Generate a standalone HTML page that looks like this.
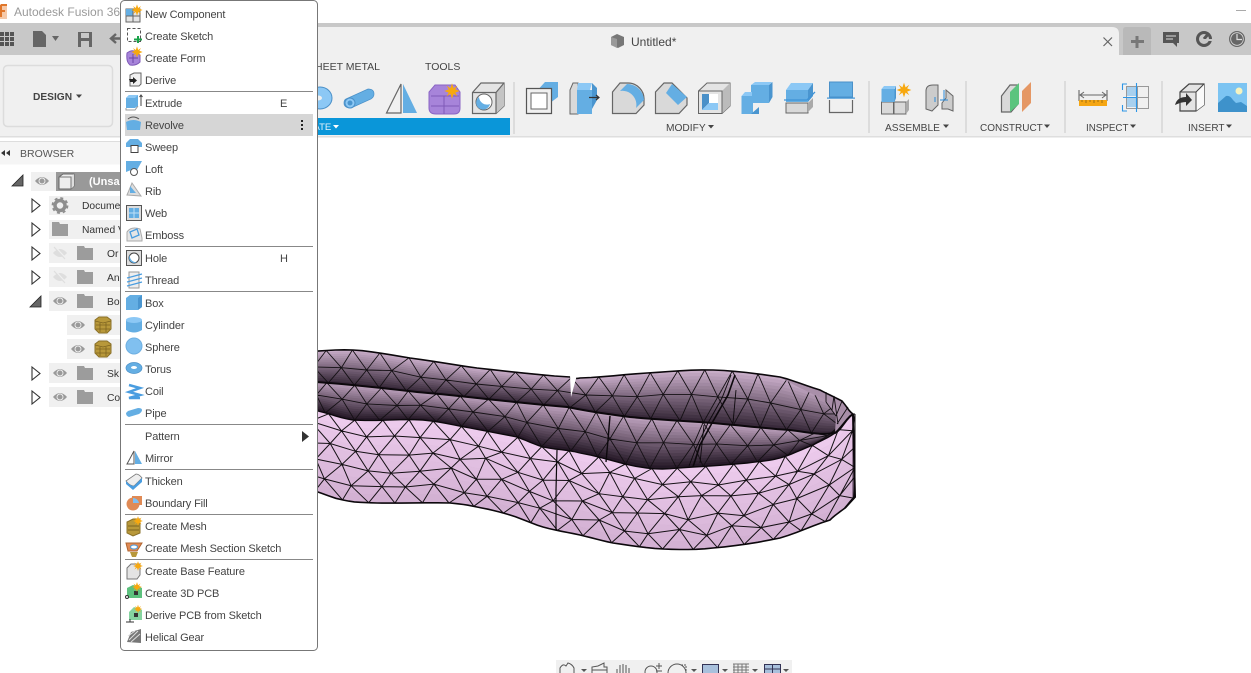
<!DOCTYPE html>
<html><head><meta charset="utf-8"><style>
html,body{margin:0;padding:0;background:#fff;width:1251px;height:673px;overflow:hidden}
svg{display:block;position:absolute;left:0;top:0}
text{font-family:"Liberation Sans",sans-serif;font-size:11px;fill:#444}
.m text{letter-spacing:-.12px}
.t text{font-size:10.300px;fill:#333}
.c{font-size:10.200px}
.g{stroke:#666;fill:#d9d9d9;stroke-width:1.2}
.b{fill:#64aee3;stroke:#4a90c8;stroke-width:.7}
.l{fill:#8cc8f5}
.d{fill:#4a95cf}
</style></head><body>
<svg id="s" width="1251" height="673" viewBox="0 0 1251 673">
<defs>
<g id="eye"><path d="M0 5Q7-3 14 5Q7 13 0 5Z" fill="#9a9a9a"/><circle cx="7" cy="5" r="3" fill="none" stroke="#f0f0f0" stroke-width=".9"/></g>
<g id="eyeoff"><path d="M0 5Q7-3 14 5Q7 13 0 5Z" fill="#dedede"/><path d="M2 -1L13 11" stroke="#f0f0f0" stroke-width="2"/><path d="M1 -1L12 11" stroke="#dedede" stroke-width="1.200"/></g>
<path id="folder" d="M0 1H7L8 3H16V15H0Z" fill="#9c9c9c"/>
<path id="tri" d="M0 0L8 6.500L0 13Z" fill="#fff" stroke="#333" stroke-width="1.100"/>
<path id="tridown" d="M0 11L11 0V11Z" fill="#666" stroke="#222" stroke-width=".8"/>
<g id="mesh"><path d="M0 3L4 0H12L16 3V12L12 16H4L0 12Z" fill="#b8983a" stroke="#8a7028"/><path d="M0 4L8 6L16 4M1 8H15M1 12H15M5 6V15M11 6V15" stroke="#7d6420" fill="none" stroke-width=".8"/></g>
<polygon id="star" points="0,-7 1.500,-2.500 5,-5 3,-1.500 7,0 3,1.500 5,5 1.500,2.500 0,7 -1.500,2.500 -5,5 -3,1.500 -7,0 -3,-1.500 -5,-5 -1.500,-2.500" fill="#f7a80f"/>
</defs>

<!-- title + tab bar -->
<rect x="0" y="23" width="1251" height="32" fill="#c8c8c8"/>
<path d="M200 55V31Q200 27 204 27H1112Q1119 27 1119 34V55Z" fill="#f0f0f0"/>
<rect x="0" y="55" width="1251" height="81" fill="#f0f0f0"/>
<rect x="0" y="136" width="1251" height="1.500" fill="#dedede"/>
<path d="M0 4H7V19H0Z" fill="#f6c9a8"/><path d="M1 5H7M1 5V17M1 11H5" stroke="#e0762a" stroke-width="2" fill="none"/>
<text x="14" y="16" style="font-size:12px;fill:#9a9a9a">Autodesk Fusion 360</text>
<rect x="1236" y="10" width="10" height="1" fill="#aaa"/>

<!-- document tab title -->
<path d="M611 37L617 34L624 37V45L618 48L611 45Z" fill="#777"/><path d="M611 37L617 39V48L611 45Z" fill="#999"/>
<text x="631" y="46" style="font-size:12px;fill:#444">Untitled*</text>

<!-- app bar icons -->
<g fill="#555"><rect x="0" y="32" width="4" height="4"/><rect x="5" y="32" width="4" height="4"/><rect x="10" y="32" width="4" height="4"/><rect x="0" y="37" width="4" height="4"/><rect x="5" y="37" width="4" height="4"/><rect x="10" y="37" width="4" height="4"/><rect x="0" y="42" width="4" height="4"/><rect x="5" y="42" width="4" height="4"/><rect x="10" y="42" width="4" height="4"/></g>
<path d="M33 31H42L46 35V47H33Z" fill="#666"/><path d="M52 36H59L55.500 41Z" fill="#666"/>
<path d="M78 32H92V47H78Z" fill="#666"/><rect x="81" y="33" width="8" height="5" fill="#c8c8c8"/><rect x="81" y="41" width="8" height="6" fill="#c8c8c8"/>
<path d="M111 38.500H121M116 34L111 38.500L116 43" stroke="#666" stroke-width="2.400" fill="none"/>

<!-- Right of tab -->
<path d="M1123 55V30Q1123 27 1126 27H1148Q1151 27 1151 30V55Z" fill="#b9b9b9"/>
<path d="M1137 36V48M1131 41.500H1144" stroke="#777" stroke-width="3"/>
<path d="M1103.500 37.500L1112 46M1112 37.500L1103.500 46" stroke="#666" stroke-width="1.200"/>
<path d="M1163 32H1179V43H1177L1177 47L1173 43H1163Z" fill="#555"/><path d="M1166 36H1176M1166 39H1173" stroke="#ddd"/>
<circle cx="1204" cy="39" r="6.500" fill="none" stroke="#555" stroke-width="3"/><path d="M1204 39L1209 33" stroke="#555" stroke-width="3"/><path d="M1204 40L1212 40" stroke="#c8c8c8" stroke-width="2"/>
<circle cx="1237" cy="39" r="7.500" fill="#666" stroke="#666"/><circle cx="1237" cy="39" r="6.300" fill="none" stroke="#ddd" stroke-width=".8"/><path d="M1237 34V39.500H1242" stroke="#ddd" stroke-width="1.200" fill="none"/>

<!-- Design -->
<rect x="3.500" y="65.500" width="109" height="61" rx="4" fill="#f0f0f0" stroke="#dcdcdc" stroke-width="1.500"/>
<text x="33" y="100" style="font-size:10.200px;font-weight:bold;fill:#444">DESIGN</text>
<path d="M76 94.500H82L79 98Z" fill="#444"/>

<!-- Tabs -->
<text x="308" y="70" style="font-size:10.500px;fill:#444">SHEET METAL</text>
<text x="425" y="70" style="font-size:10.500px;fill:#444">TOOLS</text>

<!-- Create bar -->
<rect x="121" y="118" width="389" height="17" fill="#0a96d9"/>
<text x="313.500" y="130" style="font-size:9.500px;fill:#e8f4fb">ATE</text>
<path d="M333 125H339L336 128.500Z" fill="#fff"/>

<!-- Ribbon separators -->
<g fill="#dcdcdc"><rect x="513" y="82" width="2" height="52"/><rect x="868" y="81" width="2" height="52"/><rect x="965" y="81" width="2" height="52"/><rect x="1064" y="81" width="2" height="52"/><rect x="1161" y="81" width="2" height="52"/></g>

<!-- Ribbon labels -->
<text x="666" y="131" class="c">MODIFY</text><path d="M708 125H714L711 128.500Z" fill="#444"/>
<text x="885" y="131" class="c">ASSEMBLE</text><path d="M943 124.500H949L946 128Z" fill="#444"/>
<text x="980" y="131" style="font-size:10px">CONSTRUCT</text><path d="M1044 124.500H1050L1047 128Z" fill="#444"/>
<text x="1086" y="131" style="font-size:9.800px">INSPECT</text><path d="M1130 124.500H1136L1133 128Z" fill="#444"/>
<text x="1188" y="131" style="font-size:10px">INSERT</text><path d="M1226 124.500H1232L1229 128Z" fill="#444"/>

<!-- Ribbon icons: create -->
<ellipse cx="320" cy="98" rx="12" ry="11" class="l" stroke="#4a90c8"/><ellipse cx="318" cy="98" rx="4" ry="2.500" fill="#f0f0f0"/>
<path d="M346 99L368 89Q374 89 374 94Q374 97 371 99L351 108Q344 108 344 103Q344 100 346 99Z" class="b"/><ellipse cx="350" cy="103" rx="5" ry="5" class="l" stroke="#4a90c8"/><ellipse cx="350" cy="103" rx="2.500" ry="2.500" class="d"/>
<path d="M386.500 113L401 84V113Z" fill="#f0f0f0" stroke="#666" stroke-width="1.200"/><path d="M403 84L417 113H403Z" fill="#64aee3"/>
<path d="M435 85H455L460 92V108Q460 114 454 114H436Q429 114 429 108V92Z" fill="#a784da" stroke="#8a64c4"/><path d="M431 96H459M431 106H459M444 96V114" stroke="#7f5ab8"/>
<use href="#star" transform="translate(452,91) scale(1.100)"/>
<path d="M472.500 92.500L481 83H504V106L496 113.500H472.500Z" fill="#e4e4e4" stroke="#666" stroke-width="1.200"/><path d="M496 92.500L504 83V106L496 113.500Z" fill="#c4c4c4"/><path d="M472.500 92.500H496V113.500M496 92.500L504 83" fill="none" stroke="#666" stroke-width="1.200"/>
<circle cx="484" cy="102" r="8" fill="#fff" stroke="#666"/><path d="M479 97A7 7 0 1 0 490 104A8 8 0 0 1 479 97Z" fill="#64aee3"/>

<!-- modify -->
<path d="M535 93L545 82H558V97L550 103V90H538Z" fill="#64aee3"/><path d="M538 90H550V104" fill="none" stroke="#8cc8f5" stroke-width="1"/>
<path d="M526.500 88.500H551.500V113.500H526.500Z" fill="#f0f0f0" stroke="#555" stroke-width="1.200"/><rect x="531" y="93" width="16" height="16" fill="#fff" stroke="#666"/>
<path d="M570 114V90L573 83H578V114Z" fill="#d9d9d9" stroke="#666"/><path d="M577 90H592V114H577Z" fill="#64aee3"/><path d="M592 83V109L597 100V88Z" class="d"/><path d="M578 83H592L590 90H577Z" class="l"/><path d="M589 97.500H599M596 95L599 97.500L596 100" stroke="#333" stroke-width="1.200" fill="none"/>
<path d="M612.500 113.500V92L620 83H628A16 16 0 0 1 644 100V105L636 113.500Z" class="g"/><path d="M627 84A17 17 0 0 1 644 100L636 108A14 14 0 0 0 620 91Z" fill="#64aee3"/>
<path d="M655.500 113.500V92L664 83H672L687 98V105L679 113.500Z" class="g"/><path d="M672 84L687 97L678 105L666 93Z" fill="#64aee3"/>
<path d="M698.500 113.500V91L707 83H730V106L722 113.500Z" fill="#e4e4e4" stroke="#666"/><path d="M722 91L730 83V106L722 113.500Z" fill="#bbb"/><path d="M698.500 91H722V113.500" fill="none" stroke="#666"/>
<rect x="702" y="94" width="16" height="16" fill="#fff"/><path d="M702 94H709V103L702 110Z" fill="#4a90c8"/><path d="M702 110L709 103H718V110Z" class="l"/>
<path d="M741.500 96H753V114H741.500Z" fill="#64aee3"/><path d="M751 85H769V103H751Z" fill="#64aee3"/><path d="M741.500 96L745 92H752V96Z" class="l"/><path d="M759 103V114H751L759 107Z" class="d"/><path d="M751 85L755 82H772L769 85Z" class="l"/><path d="M769 85L772.500 82V97L769 103Z" class="d"/>
<path d="M786 90H808V102H786Z" fill="#64aee3"/><path d="M786 90L791 83H813L808 90Z" class="l"/><path d="M808 90L813 83V96L808 102Z" class="d"/>
<path d="M784 100H807L815 92" stroke="#3f93d6" stroke-width="1.300" fill="none"/>
<path d="M786 103H808V113H786Z" fill="#d9d9d9" stroke="#666"/><path d="M808 112V103L813 98V107Z" fill="#aaa"/>
<rect x="829.500" y="82" width="23" height="15" fill="#64aee3" stroke="#4a90c8"/><rect x="827" y="97.500" width="28" height="1.200" fill="#3f93d6"/><path d="M829.500 100V112.500H852.500V100" fill="none" stroke="#666" stroke-width="1.200"/>

<!-- assemble -->
<rect x="881.500" y="102" width="12" height="12" fill="#d9d9d9" stroke="#666"/><rect x="894" y="102" width="12" height="12" fill="#d9d9d9" stroke="#666"/><path d="M906 102L909 99V110L906 114Z" fill="#aaa"/>
<rect x="881.500" y="89" width="13" height="13" fill="#64aee3"/><path d="M881.500 89L884 86H896L894 89Z" class="l"/><path d="M894.500 89L896 86V98L894.500 102Z" class="d"/>
<use href="#star" transform="translate(904,90) scale(1.050)"/>
<path d="M926 109V91Q926 85 933 85H938V105L932 111Z" fill="#ccc" stroke="#666"/><path d="M942 103L946 98V90L953 96V111L948 109H942Z" fill="#ccc" stroke="#666"/><path d="M935 97V102M944 90V100M940 100H948" stroke="#2a8ad8"/>

<!-- construct -->
<path d="M1001.500 96L1010 85H1018V104L1011 112H1001.500Z" class="g"/><path d="M1010 112V92L1019 83V104Z" fill="#5bc47e"/><path d="M1022 112V91L1031 82V103Z" fill="#e59764"/>

<!-- inspect -->
<path d="M1079 90V101M1107 90V101M1080 95H1106" stroke="#666" stroke-width="1.100"/><path d="M1084 92L1080 95L1084 98M1102 92L1106 95L1102 98" stroke="#666" fill="none"/>
<rect x="1079" y="100" width="28" height="6" fill="#f5a613"/><path d="M1082 100v2M1086 100v3M1090 100v2M1094 100v3M1098 100v2M1102 100v3" stroke="#a06e10"/>
<rect x="1126" y="86" width="10" height="10" fill="#a8d0ee"/><rect x="1126" y="97" width="10" height="10" fill="#a8d0ee"/>
<rect x="1126.500" y="86.500" width="22" height="22" fill="none" stroke="#999"/><path d="M1137.500 86V108M1126 97.500H1148" stroke="#999"/>
<path d="M1127 84H1122.500V90M1127 111H1122.500V105M1136.500 83V112M1123 97.500H1136" stroke="#2d96e6" stroke-width="1.100" fill="none"/>

<!-- insert -->
<path d="M1180 92L1189 84H1204V105L1196 111H1180Z" fill="#e4e4e4" stroke="#444" stroke-width="1.200"/><path d="M1196 92L1204 84V105L1196 111Z" fill="#fafafa"/><path d="M1180 92H1196V111M1196 92L1204 84" fill="none" stroke="#444"/>
<path d="M1175 105Q1177 97 1186 97V93L1192 100L1186 106V102Q1181 102 1175 105Z" fill="#333"/>
<rect x="1218" y="83" width="29" height="29" fill="#7cc4f2"/><circle cx="1239" cy="91" r="3.500" fill="#f5f3c0"/><path d="M1218 112V103L1226 96Q1230 95 1233 100L1236 103L1241 102L1247 106V112Z" fill="#3e92cb"/>

<!-- Browser -->
<rect x="0" y="141.500" width="121" height="23" fill="#f5f5f5"/><rect x="0" y="141" width="121" height="1" fill="#ddd"/>
<path d="M5 150L1 153L5 156ZM10 150L6 153L10 156Z" fill="#333"/>
<text x="20" y="157" style="font-size:10.500px;fill:#555">BROWSER</text>

<use href="#tridown" x="12" y="175"/>
<rect x="31" y="172" width="90" height="19" fill="#f0f0f0"/><rect x="56" y="172" width="65" height="19" fill="#999"/>
<use href="#eye" x="35" y="176"/>
<path d="M59 177L63 174H74V186L71 189H59Z" fill="#eee" stroke="#666"/><path d="M71 177L74 174V186L71 189Z" fill="#ddd"/><path d="M59 177H71V189" fill="none" stroke="#777"/>
<text x="89" y="185" style="font-weight:bold;fill:#fff">(Unsa</text>

<g class="t">
<use href="#tri" x="32" y="199"/>
<rect x="49" y="196" width="72" height="19" fill="#f0f0f0"/>
<circle cx="60" cy="205.500" r="5" fill="none" stroke="#8e8e8e" stroke-width="3.500"/><circle cx="60" cy="205.500" r="7.500" fill="none" stroke="#8e8e8e" stroke-width="1.800" stroke-dasharray="3 2.900"/>
<text x="82" y="209">Docume</text>
<use href="#tri" x="32" y="223"/>
<rect x="49" y="220" width="72" height="19" fill="#f0f0f0"/><use href="#folder" x="52" y="221"/>
<text x="82" y="233">Named V</text>

<use href="#tri" x="32" y="247"/><rect x="49" y="243" width="72" height="20" fill="#f0f0f0"/><use href="#eyeoff" x="53" y="248"/><use href="#folder" x="77" y="245"/><text x="107" y="257">Or</text>
<use href="#tri" x="32" y="271"/><rect x="49" y="267" width="72" height="20" fill="#f0f0f0"/><use href="#eyeoff" x="53" y="272"/><use href="#folder" x="77" y="269"/><text x="107" y="281">An</text>
<use href="#tridown" x="30" y="296"/><rect x="49" y="291" width="72" height="20" fill="#f0f0f0"/><use href="#eye" x="53" y="296"/><use href="#folder" x="77" y="293"/><text x="107" y="305">Bo</text>
<rect x="67" y="315" width="54" height="20" fill="#f0f0f0"/><use href="#eye" x="71" y="320"/><use href="#mesh" x="95" y="317"/>
<rect x="67" y="339" width="54" height="20" fill="#f0f0f0"/><use href="#eye" x="71" y="344"/><use href="#mesh" x="95" y="341"/>
<use href="#tri" x="32" y="367"/><rect x="49" y="363" width="72" height="20" fill="#f0f0f0"/><use href="#eye" x="53" y="368"/><use href="#folder" x="77" y="365"/><text x="107" y="377">Sk</text>
<use href="#tri" x="32" y="391"/><rect x="49" y="387" width="72" height="20" fill="#f0f0f0"/><use href="#eye" x="53" y="392"/><use href="#folder" x="77" y="389"/><text x="107" y="401">Co</text>
</g>

<!-- Model base (mesh added by script) -->
<g id="model">
<path d="M300 352L353 350L410 358L477 368L570 377L580 378L647 373L713 370L780 377L820 390L842 401L853 414L855 497L845 508L830 520L780 538L713 548L663 549L613 543L580 535L543 527L510 515L477 507L450 503L377 503L343 500L300 487Z" fill="#7a627b"/>
</g>

<!-- Bottom toolbar -->
<rect x="556" y="660" width="236" height="13" fill="#f0f0f0"/>
<g fill="none" stroke="#555">
<path d="M560 673V668Q563 663 566 666L568 663Q572 664 574 668V673"/><path d="M581 669H587L584 672Z" fill="#555" stroke="none"/>
<path d="M592 673V667L598 666L604 663V667H607V673M592 670H607"/>
<path d="M617 673V669M620 673V665M623 673V664M626 673V665M629 673V668"/>
<circle cx="651" cy="672" r="6"/><path d="M656 666H662M659 663V669M656 671H662"/>
<circle cx="677" cy="673" r="9"/><path d="M681 665H686V673" stroke-dasharray="2 1"/><path d="M691 669H697L694 672Z" fill="#555" stroke="none"/>
<rect x="702.500" y="664.500" width="16" height="10" fill="#a8c0dc" stroke="#335"/><path d="M722 669H728L725 672Z" fill="#555" stroke="none"/>
<path d="M733 664H749M733 667H749M733 670H749M733 673H749M734 664V673M738 664V673M742 664V673M746 664V673" stroke="#777"/><path d="M752 669H758L755 672Z" fill="#555" stroke="none"/>
<rect x="764.500" y="664.500" width="16" height="10" fill="#a8c0dc" stroke="#335"/><path d="M772.500 664V673M764 669H781" stroke="#335"/><path d="M783 669H789L786 672Z" fill="#555" stroke="none"/>
</g>

<!-- Menu -->
<rect x="120.500" y=".5" width="197" height="650" rx="4" fill="#fff" stroke="#777" stroke-width="1"/>
<rect x="125" y="114" width="188" height="22" fill="#d6d6d6"/>
<g fill="#888"><rect x="125" y="91" width="188" height="1"/><rect x="125" y="246" width="188" height="1"/><rect x="125" y="291" width="188" height="1"/><rect x="125" y="424" width="188" height="1"/><rect x="125" y="469" width="188" height="1"/><rect x="125" y="514" width="188" height="1"/><rect x="125" y="559" width="188" height="1"/></g>
<g class="m">
<text x="145" y="18">New Component</text>
<text x="145" y="40">Create Sketch</text>
<text x="145" y="62">Create Form</text>
<text x="145" y="84">Derive</text>
<text x="145" y="107">Extrude</text><text x="280" y="107">E</text>
<text x="145" y="129">Revolve</text>
<text x="145" y="151">Sweep</text>
<text x="145" y="173">Loft</text>
<text x="145" y="195">Rib</text>
<text x="145" y="217">Web</text>
<text x="145" y="239">Emboss</text>
<text x="145" y="262">Hole</text><text x="280" y="262">H</text>
<text x="145" y="284">Thread</text>
<text x="145" y="307">Box</text>
<text x="145" y="329">Cylinder</text>
<text x="145" y="351">Sphere</text>
<text x="145" y="373">Torus</text>
<text x="145" y="395">Coil</text>
<text x="145" y="417">Pipe</text>
<text x="145" y="440">Pattern</text>
<text x="145" y="462">Mirror</text>
<text x="145" y="485">Thicken</text>
<text x="145" y="507">Boundary Fill</text>
<text x="145" y="530">Create Mesh</text>
<text x="145" y="552">Create Mesh Section Sketch</text>
<text x="145" y="575">Create Base Feature</text>
<text x="145" y="597">Create 3D PCB</text>
<text x="145" y="619">Derive PCB from Sketch</text>
<text x="145" y="641">Helical Gear</text>
</g>
<path d="M302 431L309 436.500L302 442Z" fill="#333"/>
<g fill="#222"><rect x="301" y="120" width="2" height="2"/><rect x="301" y="124" width="2" height="2"/><rect x="301" y="128" width="2" height="2"/></g>

<!-- Menu icons -->
<rect x="126" y="9" width="14" height="13" fill="#e4e4e4" stroke="#666"/><rect x="126" y="9" width="7" height="7" fill="#64aee3"/><path d="M133 9V22M126 16H140" stroke="#666"/><use href="#star" transform="translate(137,10) scale(.8)"/>
<rect x="127.500" y="28.500" width="13" height="13" fill="none" stroke="#555" stroke-dasharray="3 2"/><path d="M138 36V43M134 39.500H142" stroke="#1aa34a" stroke-width="2"/>
<path d="M127 53Q131 50 134 51L140 55V62Q136 66 130 65Q126 62 127 53Z" fill="#a784da" stroke="#7f5ab8"/><path d="M129 58H138M133 54V63" stroke="#6a45a8"/><use href="#star" transform="translate(137,52) scale(.8)"/>
<path d="M130 75L134 73H141V84L139 86H130Z" fill="#f0f0f0" stroke="#666"/><path d="M129 79H133V77L137 80.500L133 84V82H130Z" fill="#222"/>
<path d="M126 98L129 95H138V106L135 108H126Z" fill="#64aee3"/><path d="M129 95H138L135 98H126Z" class="l"/><path d="M126 108V110H135L138 106" stroke="#999" fill="none"/><path d="M141 95V106M139.500 97L141 95L142.500 97" stroke="#444" fill="none"/>
<path d="M126 122Q133 118 141 122L140 130H127Z" fill="#64aee3"/><path d="M128 119Q133 115 139 119" stroke="#555" fill="none"/>
<path d="M126 143L130 139H138L142 143V147H126Z" fill="#64aee3"/><rect x="131" y="145.500" width="7" height="7" fill="#fff" stroke="#444"/>
<path d="M126 161H142L137 170H131L126 172Z" fill="#64aee3"/><circle cx="134" cy="172" r="3.500" fill="#fff" stroke="#555"/>
<path d="M127 195L132 183L141 196Z" fill="#ddd" stroke="#aaa"/><path d="M130 186L136 193H130Z" fill="#64aee3"/>
<rect x="126.500" y="205.500" width="15" height="15" fill="#ddd" stroke="#555"/><rect x="129" y="208" width="10" height="10" fill="#64aee3"/><path d="M134 208V218M129 213H139" stroke="#bfe0f7"/>
<path d="M127 239V232Q131 226 140 229L142 238V241H127Z" fill="#e6e6e6" stroke="#aaa"/><path d="M130 232L137 229L139 235L132 238Z" fill="none" stroke="#4a9de0" stroke-width="1.300"/>
<rect x="126.500" y="250.500" width="15" height="15" fill="#ddd" stroke="#555"/><circle cx="134" cy="258" r="5" fill="#fff" stroke="#444"/><path d="M130 255A5 5 0 0 0 137 262A6 6 0 0 1 130 255Z" fill="#64aee3"/>
<path d="M129 272H139V288H129Z" fill="#eee" stroke="#999"/><path d="M127 278L142 274M127 282L142 278M127 286L142 282" stroke="#4a9de0" stroke-width="1.200"/>
<path d="M126 298L130 295H142V307L138 310H126Z" fill="#64aee3"/><path d="M138 298L142 295V307L138 310Z" class="d"/>
<path d="M126 320Q134 315 142 320V330Q134 335 126 330Z" fill="#64aee3"/><ellipse cx="134" cy="320" rx="8" ry="3" class="l"/>
<circle cx="134" cy="346" r="8" fill="#80c0f0" stroke="#6fb0e2"/>
<ellipse cx="134" cy="368" rx="8" ry="5.500" class="b"/><ellipse cx="134" cy="367.500" rx="3" ry="1.500" fill="#fff"/>
<path d="M129 385L140 388L129 392L140 395L129 398L140 398" stroke="#4a9de0" stroke-width="2.500" fill="none"/>
<path d="M128 411L138 408Q142 408 142 410Q142 412 139 414L129 417Q126 416 126 413Z" fill="#64aee3"/>
<path d="M127 464L134 451V464Z" fill="#fff" stroke="#555"/><path d="M135 451L142 464H135Z" fill="#64aee3"/>
<path d="M126 481L136 474Q139 474 142 478L134 486Q130 486 126 481Z" fill="#eee" stroke="#777" stroke-width=".8"/><path d="M126 481V484L133 490L142 482V478L134 486Q130 486 126 481Z" fill="#4a9de0"/>
<path d="M132 496H142V505H132Z" fill="#e08a55"/><circle cx="133" cy="504" r="6.500" fill="#e08a55"/><path d="M133 498A6 6 0 0 1 139 503H133Z" fill="#7fbef0"/>
<path d="M127 522L133 519H140V533L133 536L127 533Z" fill="#b8983a" stroke="#8a7028"/><path d="M128 526H139M128 530H139" stroke="#7d6420"/><use href="#star" transform="translate(138,521) scale(.7)"/>
<path d="M126 543H142L137 551H128Z" fill="#e08a55" stroke="#b06530"/><ellipse cx="134" cy="547" rx="3.500" ry="2" fill="#fff" stroke="#4a9de0"/><path d="M130 552H138L136 557H132Z" fill="#b8983a"/>
<path d="M127 568L131 564H140V575L137 579H127Z" fill="#e4e4e4" stroke="#777"/><use href="#star" transform="translate(138,566) scale(.7)"/>
<path d="M127 588L133 585L142 588V598H127Z" fill="#5cc17e"/><rect x="134" y="591" width="4" height="4" fill="#333"/><circle cx="127" cy="597" r="1.500" fill="#fff" stroke="#333"/><use href="#star" transform="translate(137,587) scale(.7)"/>
<path d="M129 612L134 607L142 610V620H129Z" fill="#85d4a0"/><rect x="134" y="613" width="4" height="4" fill="#333"/><path d="M126 622H134M130 619V622" stroke="#333"/><use href="#star" transform="translate(138,609) scale(.6)"/>
<path d="M127 642L131 632L141 629V643Z" fill="#777"/><path d="M129 640L138 631M131 642L140 634M128 636L135 631" stroke="#ddd"/>
</svg>
<script>
(function(){
var NS="http://www.w3.org/2000/svg",model=document.getElementById("model");
var seed=11;function R(){seed=(seed*9301+49297)%233280;return seed/233280-.5;}
function smooth(c){var o=[];for(var i=0;i<c.length-1;i++){var p0=c[Math.max(0,i-1)],p1=c[i],p2=c[i+1],p3=c[Math.min(c.length-1,i+2)];
 for(var k=0;k<6;k++){var t=k/6,t2=t*t,t3=t2*t;o.push([p1[0]+(p2[0]-p1[0])*t,.5*(2*p1[1]+(p2[1]-p0[1])*t+(2*p0[1]-5*p1[1]+4*p2[1]-p3[1])*t2+(3*p1[1]-p0[1]-3*p2[1]+p3[1])*t3)]);}}
 o.push(c[c.length-1]);return o;}
function at(c,x){if(x<=c[0][0])return c[0][1];for(var i=1;i<c.length;i++){if(x<=c[i][0]){var a=c[i-1],b=c[i];return a[1]+(b[1]-a[1])*(x-a[0])/(b[0]-a[0]);}}return c[c.length-1][1];}
var rim=smooth([[300,352],[353,350],[410,358],[477,368],[570,377],[580,378],[647,373],[713,370],[780,377],[820,390],[842,401],[853,414]]);
var div=smooth([[300,381],[417,392],[567,407],[630,417],[713,423],[790,430],[835,433],[853,414]]);
var ft=smooth([[300,405],[318,411],[353,420],[423,420],[470,428],[517,437],[543,447],[580,453],[647,468],[693,467],[747,463],[780,458],[813,445],[835,433],[853,414]]);
var fb=smooth([[300,487],[343,500],[377,503],[450,503],[477,507],[510,515],[543,527],[580,535],[613,543],[663,549],[713,548],[780,538],[830,520],[845,508],[855,497]]);
function mix(a,b,t){return "rgb("+[0,1,2].map(function(i){return Math.round(a[i]+(b[i]-a[i])*t)}).join(",")+")";}
function P(d,fill,stroke,w){var p=document.createElementNS(NS,"path");p.setAttribute("d",d);p.setAttribute("fill",fill||"none");if(stroke){p.setAttribute("stroke",stroke);p.setAttribute("stroke-width",w);}model.appendChild(p);}
function shade(top,bot,c1,c2,n){for(var s=0;s<n;s++){var t0=s/n,t1=(s+1)/n,a=[],b=[];
 for(var x=300;x<=856;x+=6){var T=at(top,x),B=at(bot,x);a.push(x+" "+(T+(B-T)*t0).toFixed(1));b.unshift(x+" "+(T+(B-T)*t1).toFixed(1));}
 var col=mix(c1,c2,(s+.5)/n);P("M"+a.concat(b).join("L")+"Z",col,col,.5);}}
function f(q){return q[0].toFixed(1)+" "+q[1].toFixed(1);}
function band(top,bot,rows,step,jit,sw){
 var G=[],r,x,x0=300,x1=855,d="";
 for(r=0;r<=rows;r++){var row=[],off=r%2?step/2:0;
  for(x=x0-step+off;x<=x1+step;x+=step){
   var xx=Math.min(x1,Math.max(x0,x+((r==0||r==rows)?R()*4:R()*jit)));
   var t=r/rows;if(r>0&&r<rows)t+=R()*.1;
   row.push([xx,at(top,xx)+(at(bot,xx)-at(top,xx))*t]);}
  G.push(row);}
 for(r=0;r<rows;r++){var A=G[r],B=G[r+1],n=Math.min(A.length,B.length);
  for(var i=0;i<n;i++){
   d+="M"+f(A[i])+"L"+f(B[i]);
   if(r%2){if(i+1<n)d+="M"+f(A[i])+"L"+f(B[i+1]);}
   else{if(i>0)d+="M"+f(A[i])+"L"+f(B[i-1]);}
  }}
 for(r=1;r<rows;r++){d+="M"+G[r].map(f).join("L");}
 P(d,"none","#141014",sw);
}
function line(pts,w){P("M"+pts.map(f).join("L"),"none","#0c080c",w);}
shade(rim,div,[204,176,204],[52,38,54],16);
shade(div,ft,[190,162,190],[34,22,36],16);
band(rim,div,2,27,6,.9);
band(div,ft,2,27,6,.9);
/* right-hand curved rim strip */
P("M780 377L820 390L842 401L853 414L835 433L836 415L825 400L800 388Z","#a98fa9");
P("M826 392L826 402M834 396L832 410M842 401L836 416M848 407L837 424M853 414L838 430M826 402L836 416M834 396L838 424","none","#141014",.9);
shade(ft,fb,[238,204,238],[210,176,210],10);
band(ft,fb,5,27,7,1);
line(rim,1.6);line(div,2);line(ft,1.4);line(fb,1.6);
line([[853,414],[855,497],[845,508]],2);
/* dividers with dense mesh */
line([[735,375],[728,395],[712,423],[700,445],[693,467]],1.6);
line([[731,375],[722,398],[708,423],[696,448],[689,466]],.9);
line([[736,390],[733,423]],.9);
line([[704,425],[700,463]],.9);
line([[610,416],[608,440],[606,462]],1.4);
line([[557,450],[556,490],[556,530]],1.2);
P("M570 375L577 375L571 397Z","#fff");
})();
</script>
</body></html>
